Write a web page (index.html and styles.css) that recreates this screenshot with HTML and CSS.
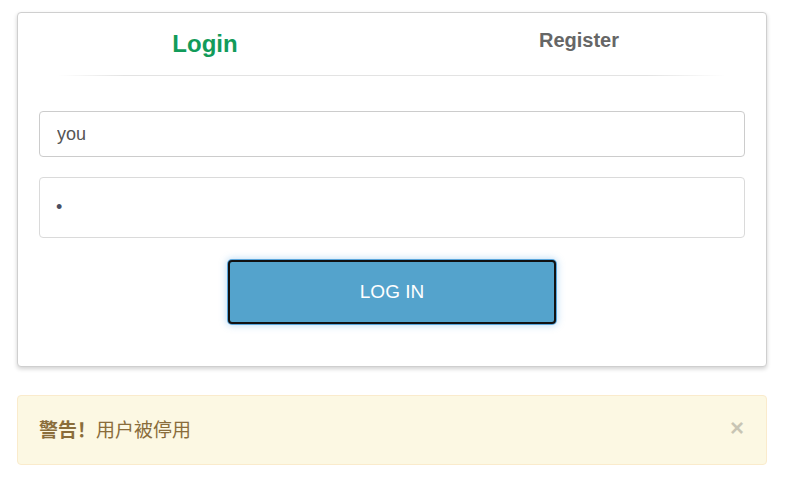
FILE: index.html
```html
<!DOCTYPE html>
<html lang="zh-CN">
<head>
<meta charset="utf-8">
<title>Login</title>
<link rel="stylesheet" href="styles.css">
</head>
<body>
<div class="page">
  <div class="card">
    <div class="tabs">
      <div class="tab tab-active">Login</div>
      <div class="tab">Register</div>
    </div>
    <div class="divider"></div>
    <form class="form">
      <input class="field field-user" type="text" value="you">
      <input class="field field-pass" type="password" value="a">
      <div class="actions">
        <button class="btn" type="button">LOG IN</button>
      </div>
    </form>
  </div>
  <div class="alert">
    <span class="alert-text"><strong>警告！</strong>用户被停用</span>
    <span class="close">&times;</span>
  </div>
</div>
</body>
</html>
```
FILE: styles.css
```css
* { box-sizing: border-box; }
html, body { margin: 0; padding: 0; background: #fff; }
body {
  font-family: "Liberation Sans", Arial, "Noto Sans CJK SC", sans-serif;
  color: #333;
}
.page {
  padding: 12px 20px 0 17px;
}
.card {
  border: 1px solid #cfcfcf;
  border-radius: 4px;
  box-shadow: 0 2px 4px rgba(0, 0, 0, 0.18);
  background: #fff;
}
.tabs {
  display: flex;
  height: 62px;
}
.tab {
  flex: 1;
  text-align: center;
  font-weight: bold;
  font-size: 20px;
  line-height: 20px;
  padding-top: 17px;
  color: #666;
}
.tab-active {
  font-size: 24px;
  line-height: 24px;
  padding-top: 19px;
  color: #129b5a;
}
.divider {
  height: 1px;
  margin: 0 40px;
  background: linear-gradient(to right, rgba(225,225,225,0) 0%, #e3e3e3 10%, #e3e3e3 88%, rgba(225,225,225,0) 100%);
}
.form {
  display: flex;
  flex-direction: column;
  padding: 35px 21px 42px;
}
.field {
  display: block;
  width: 100%;
  border: 1px solid #ccc;
  border-radius: 4px;
  padding: 0 17px;
  font-family: "Liberation Sans", Arial, sans-serif;
  font-size: 18px;
  color: #555;
  background: #fff;
  outline: none;
}
.field-user { height: 46px; }
.field-pass {
  height: 61px;
  margin-top: 20px;
  border-color: #dadada;
  color: #4a4e62;
  font-size: 18px;
  padding-left: 16px;
}
.actions {
  display: flex;
  justify-content: center;
  margin-top: 22px;
}
.btn {
  width: 328px;
  height: 64px;
  background: #54a3cc;
  border: 2px solid #111;
  border-radius: 4px;
  box-shadow: 0 0 0 1px #5aa6dc, 0 0 7px 2px rgba(90, 165, 230, 0.35);
  color: #fff;
  font-family: "Liberation Sans", Arial, sans-serif;
  font-size: 19px;
  padding: 0 0 0 0;
}
.alert {
  margin-top: 28px;
  height: 70px;
  display: flex;
  align-items: center;
  justify-content: space-between;
  padding: 0 22px 4px 21px;
  background: #fcf8e3;
  border: 1px solid #faebcc;
  border-radius: 4px;
  color: #8a6d3b;
  font-size: 19px;
  font-family: "Liberation Sans", Arial, "Noto Sans CJK SC", sans-serif;
}
.alert-text strong { font-weight: bold; }
.close {
  font-size: 24px;
  font-weight: bold;
  line-height: 1;
  color: #000;
  opacity: 0.2;
}
```
